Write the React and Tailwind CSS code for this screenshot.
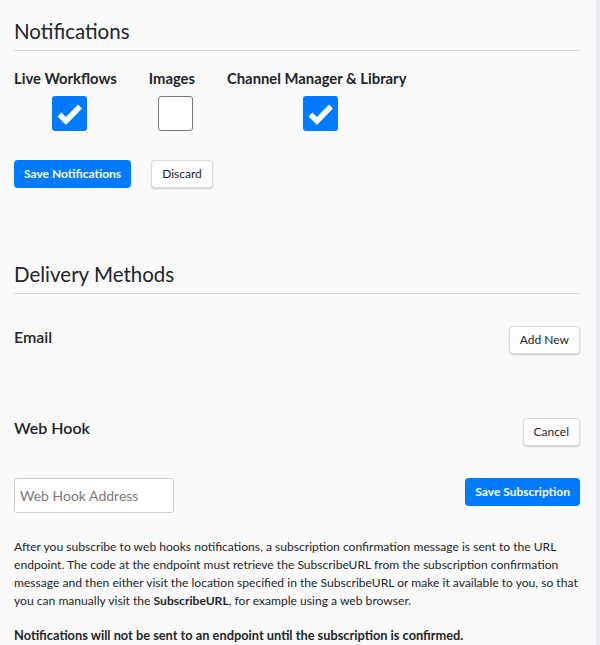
import { useState } from 'react';

const font = { fontFamily: 'Lato, "Open Sans", Arial, sans-serif' };

const topics = [
  { key: 'live', label: 'Live Workflows', checked: true },
  { key: 'images', label: 'Images', checked: false },
  { key: 'channel', label: 'Channel Manager & Library', checked: true }
];

const CheckBox = ({ checked, onChange }) => {
  return (
    <button
      type="button"
      onClick={onChange}
      className={`ml-2 w-[35px] h-[35px] rounded-[3px] flex items-center justify-center ${
        checked ? 'bg-[#007bff]' : 'bg-white border border-[#767676]'
      }`}
    >
      {checked && (
        <svg width="35" height="35" viewBox="0 0 35 35">
          <polyline
            points="7.5,18.5 14,25 28,10.5"
            fill="none"
            stroke="white"
            strokeWidth="5.5"
            strokeLinejoin="miter"
          />
        </svg>
      )}
    </button>
  );
};

const WhiteButton = ({ children }) => (
  <button
    type="button"
    className="h-[28px] px-[10px] bg-white border border-[#dcdcdc] rounded-[4px] shadow-[0_1px_2px_rgba(0,0,0,0.18)] text-[12px] text-[#212529]"
  >
    {children}
  </button>
);

const BlueButton = ({ children }) => (
  <button
    type="button"
    className="h-[28px] px-[10px] bg-[#007bff] rounded-[4px] text-[12px] font-bold text-white"
  >
    {children}
  </button>
);

const App = () => {

  const [checks, setChecks] = useState(
    Object.fromEntries(topics.map((t) => [t.key, t.checked]))
  );

  const toggle = (key) => setChecks((c) => ({ ...c, [key]: !c[key] }));

  return (
    <div className="min-h-screen bg-[#ebebf0] pr-[4px]" style={font}>

      <div className="min-h-[645px] bg-[#fafafa] pl-[14px] pr-[16px] pt-[16px] text-[#212529]">

        {/* NOTIFICATIONS */}

        <h2 className="text-[20.5px] leading-[30px] pb-[4px] border-b border-[#dadada]">
          Notifications
        </h2>

        <div className="flex gap-[32px] mt-[17px]">
          {topics.map((t) => (
            <div key={t.key} className="flex flex-col items-center">
              <span className="text-[14.8px] leading-[20px] font-bold whitespace-nowrap">
                {t.label}
              </span>
              <div className="mt-[8px]">
                <CheckBox checked={checks[t.key]} onChange={() => toggle(t.key)} />
              </div>
            </div>
          ))}
        </div>

        <div className="flex gap-[20px] mt-[29px]">
          <BlueButton>Save Notifications</BlueButton>
          <WhiteButton>Discard</WhiteButton>
        </div>

        {/* DELIVERY METHODS */}

        <h2 className="mt-[71px] text-[20.5px] leading-[30px] pb-[4px] border-b border-[#dadada]">
          Delivery Methods
        </h2>

        <div className="flex justify-between items-start mt-[32px]">
          <span className="text-[16px] leading-[22px] font-semibold">Email</span>
          <WhiteButton>Add New</WhiteButton>
        </div>

        <div className="flex justify-between items-start mt-[64px]">
          <span className="text-[16px] leading-[20px] font-semibold">Web Hook</span>
          <WhiteButton>Cancel</WhiteButton>
        </div>

        <div className="flex justify-between items-start mt-[32px]">
          <input
            type="text"
            placeholder="Web Hook Address"
            className="w-[160px] h-[35px] px-[5px] bg-white border border-[#cfcfcf] rounded-[3px] text-[14px] placeholder:text-[#7a7a7a] outline-none"
          />
          <BlueButton>Save Subscription</BlueButton>
        </div>

        <p className="mt-[25px] text-[12.1px] leading-[18px]">
          After you subscribe to web hooks notifications, a subscription confirmation message is sent to the URL
          endpoint. The code at the endpoint must retrieve the SubscribeURL from the subscription confirmation
          message and then either visit the location specified in the SubscribeURL or make it available to you, so that
          you can manually visit the <b>SubscribeURL</b>, for example using a web browser.
        </p>

        <p className="mt-[16px] text-[12.8px] leading-[18px] font-bold">
          Notifications will not be sent to an endpoint until the subscription is confirmed.
        </p>

      </div>

    </div>
  );
};

export default App;
